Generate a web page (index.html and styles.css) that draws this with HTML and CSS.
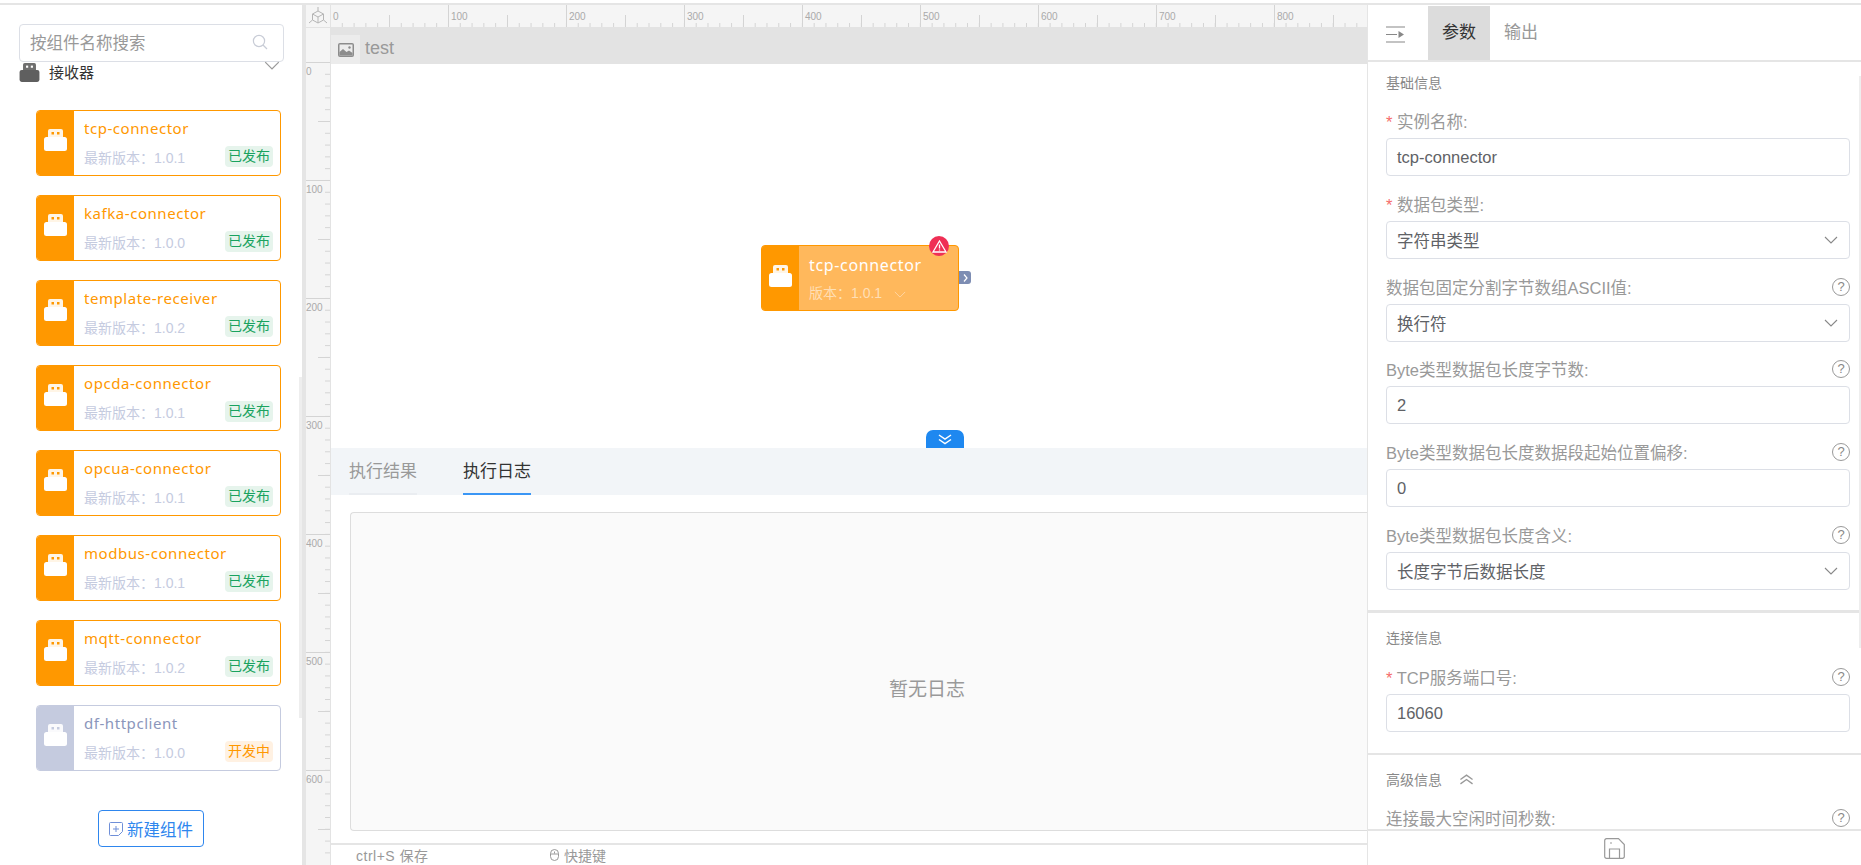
FILE: index.html
```html
<!DOCTYPE html>
<html lang="en">

<head>
    <meta charset="UTF-8">
    <meta name="viewport" content="width=device-width, initial-scale=1.0">
    <title>test</title>
    <link rel="stylesheet" href="styles.css">
</head>

<body>
    <svg class="defs" width="0" height="0">
        <symbol id="plug" viewBox="0 0 23 22">
            <path d="M6 0h11a2 2 0 0 1 2 2v7H4V2a2 2 0 0 1 2-2z" fill="currentColor" opacity=".9"/>
            <rect x="0" y="8" width="23" height="14" rx="2.5" fill="currentColor"/>
            <rect x="7.5" y="3" width="2.5" height="2.5" fill="var(--dot)"/>
            <rect x="13" y="3" width="2.5" height="2.5" fill="var(--dot)"/>
        </symbol>
        <symbol id="chevron" viewBox="0 0 14 8">
            <path d="M1 1l6 6 6-6" fill="none" stroke="currentColor" stroke-width="1.1"/>
        </symbol>
    </svg>

    <div class="topline"></div>
    <div class="app">
        <!-- Component list -->
        <aside class="side">
            <div class="search">
                <span>按组件名称搜索</span>
                <svg width="16" height="16" viewBox="0 0 16 16" fill="none" stroke="#c8ccd6" stroke-width="1.2"><circle cx="7" cy="7" r="5.6"/><path d="M11 11l4 4"/></svg>
            </div>
            <div class="group">
                <svg class="group-icon" width="21" height="19"><use href="#plug"/></svg>
                <span>接收器</span>
                <svg class="group-arrow" width="16" height="9"><use href="#chevron"/></svg>
            </div>
            <div class="cards">
                <div class="card">
                    <div class="card-band"><svg width="23" height="22"><use href="#plug"/></svg></div>
                    <div class="card-main">
                        <div class="card-name">tcp-connector</div>
                        <div class="card-foot"><span>最新版本：1.0.1</span><span class="tag">已发布</span></div>
                    </div>
                </div>
                <div class="card">
                    <div class="card-band"><svg width="23" height="22"><use href="#plug"/></svg></div>
                    <div class="card-main">
                        <div class="card-name">kafka-connector</div>
                        <div class="card-foot"><span>最新版本：1.0.0</span><span class="tag">已发布</span></div>
                    </div>
                </div>
                <div class="card">
                    <div class="card-band"><svg width="23" height="22"><use href="#plug"/></svg></div>
                    <div class="card-main">
                        <div class="card-name">template-receiver</div>
                        <div class="card-foot"><span>最新版本：1.0.2</span><span class="tag">已发布</span></div>
                    </div>
                </div>
                <div class="card">
                    <div class="card-band"><svg width="23" height="22"><use href="#plug"/></svg></div>
                    <div class="card-main">
                        <div class="card-name">opcda-connector</div>
                        <div class="card-foot"><span>最新版本：1.0.1</span><span class="tag">已发布</span></div>
                    </div>
                </div>
                <div class="card">
                    <div class="card-band"><svg width="23" height="22"><use href="#plug"/></svg></div>
                    <div class="card-main">
                        <div class="card-name">opcua-connector</div>
                        <div class="card-foot"><span>最新版本：1.0.1</span><span class="tag">已发布</span></div>
                    </div>
                </div>
                <div class="card">
                    <div class="card-band"><svg width="23" height="22"><use href="#plug"/></svg></div>
                    <div class="card-main">
                        <div class="card-name">modbus-connector</div>
                        <div class="card-foot"><span>最新版本：1.0.1</span><span class="tag">已发布</span></div>
                    </div>
                </div>
                <div class="card">
                    <div class="card-band"><svg width="23" height="22"><use href="#plug"/></svg></div>
                    <div class="card-main">
                        <div class="card-name">mqtt-connector</div>
                        <div class="card-foot"><span>最新版本：1.0.2</span><span class="tag">已发布</span></div>
                    </div>
                </div>
                <div class="card card-dev">
                    <div class="card-band"><svg width="23" height="22"><use href="#plug"/></svg></div>
                    <div class="card-main">
                        <div class="card-name">df-httpclient</div>
                        <div class="card-foot"><span>最新版本：1.0.0</span><span class="tag tag-dev">开发中</span></div>
                    </div>
                </div>
            </div>
            <button class="new-btn" type="button">
                <svg width="14" height="14" viewBox="0 0 14 14" fill="none" stroke="#6f8fd8"><path d="M1.500.5h11a1 1 0 0 1 1 1v8l-4 4h-8a1 1 0 0 1-1-1v-11a1 1 0 0 1 1-1zM7 4v6M4 7h6"/></svg>
                新建组件
            </button>
            <div class="side-thumb"></div>
        </aside>

        <!-- Canvas with rulers -->
        <main class="stage">
            <div class="corner">
                <svg width="20" height="20" viewBox="0 0 20 20" fill="none" stroke="#b5b5b5"><path d="M10 1v4M10 5l5.500 3v6L10 17l-5.500-3V8zM4.500 8l5.500 3 5.500-3M10 11v6M4.500 14L1 17M15.500 14L19 17"/></svg>
            </div>
            <div class="ruler-top">
                <span>0</span><span>100</span><span>200</span><span>300</span><span>400</span><span>500</span><span>600</span><span>700</span><span>800</span>
            </div>
            <div class="ruler-left">
                <div class="ruler-left-ticks">
                    <span>0</span><span>100</span><span>200</span><span>300</span><span>400</span><span>500</span><span>600</span>
                </div>
            </div>
            <div class="work">
                <div class="page-bar">
                    <div class="page-tab">
                        <svg width="16" height="14" viewBox="0 0 16 14"><rect width="16" height="14" rx="2" fill="#8c8c8c"/><rect x="1.500" y="1.500" width="13" height="11" fill="#ececec"/><path d="M1.500 12.500V9l3.500-3 3.500 3 2.500-1.500 3.500 2.500v2.500z" fill="#8c8c8c"/><circle cx="11.500" cy="4.500" r="1.200" fill="#8c8c8c"/></svg>
                    </div>
                    <span class="page-name">test</span>
                </div>
                <div class="canvas">
                    <div class="node">
                        <div class="node-band"><svg width="23" height="22"><use href="#plug"/></svg></div>
                        <div class="node-main">
                            <div class="node-name">tcp-connector</div>
                            <div class="node-ver">版本：1.0.1 <svg width="12" height="7"><use href="#chevron"/></svg></div>
                        </div>
                        <div class="node-alert">
                            <svg width="15" height="13" viewBox="0 0 15 13" fill="none" stroke="#fff" stroke-width="1.300"><path d="M7.500 1L14 12H1zM7.500 4.500v4M7.500 9.500v1"/></svg>
                        </div>
                        <div class="node-port">
                            <svg width="5" height="8" viewBox="0 0 5 8" fill="none" stroke="#fff" stroke-width="1.200"><path d="M1 .5L4 4 1 7.500"/></svg>
                        </div>
                    </div>
                    <div class="collapse">
                        <svg width="14" height="11" viewBox="0 0 14 11" fill="none" stroke="#fff" stroke-width="1.500"><path d="M1 1l6 4 6-4M1 5.500l6 4 6-4"/></svg>
                    </div>
                </div>
                <div class="log-tabs">
                    <span class="log-tab">执行结果</span>
                    <span class="log-tab log-tab-on">执行日志</span>
                </div>
                <div class="log-body">
                    <div class="log-empty">暂无日志</div>
                </div>
                <div class="status">
                    <span class="status-save">ctrl+S 保存</span>
                    <span class="status-keys">
                        <svg width="9" height="12" viewBox="0 0 9 12" fill="none" stroke="#999"><rect x=".5" y=".5" width="8" height="11" rx="4"/><path d="M.5 5h8M4.500 2.500v2"/></svg>
                        快捷键
                    </span>
                </div>
            </div>
        </main>

        <!-- Properties -->
        <aside class="props">
            <div class="props-head">
                <svg class="props-toggle" width="19" height="17" viewBox="0 0 19 17" fill="none" stroke="#888" stroke-width="1.200"><path d="M0 1h19M0 8.500h11M0 16h19"/><path d="M12.500 5l5.500 3.500-5.500 3.500z" fill="#888" stroke="none"/></svg>
                <span class="props-tab props-tab-on">参数</span>
                <span class="props-tab">输出</span>
            </div>
            <div class="props-body">
                <section class="sec sec-first">
                    <h4>基础信息</h4>
                    <div class="field">
                        <div class="field-label"><span><i>*</i> 实例名称:</span></div>
                        <div class="box">tcp-connector</div>
                    </div>
                    <div class="field">
                        <div class="field-label"><span><i>*</i> 数据包类型:</span></div>
                        <div class="box">字符串类型<svg width="14" height="8"><use href="#chevron"/></svg></div>
                    </div>
                    <div class="field">
                        <div class="field-label"><span>数据包固定分割字节数组ASCII值:</span><b class="help">?</b></div>
                        <div class="box">换行符<svg width="14" height="8"><use href="#chevron"/></svg></div>
                    </div>
                    <div class="field">
                        <div class="field-label"><span>Byte类型数据包长度字节数:</span><b class="help">?</b></div>
                        <div class="box">2</div>
                    </div>
                    <div class="field">
                        <div class="field-label"><span>Byte类型数据包长度数据段起始位置偏移:</span><b class="help">?</b></div>
                        <div class="box">0</div>
                    </div>
                    <div class="field">
                        <div class="field-label"><span>Byte类型数据包长度含义:</span><b class="help">?</b></div>
                        <div class="box">长度字节后数据长度<svg width="14" height="8"><use href="#chevron"/></svg></div>
                    </div>
                </section>
                <section class="sec sec-second">
                    <h4>连接信息</h4>
                    <div class="field">
                        <div class="field-label"><span><i>*</i> TCP服务端口号:</span><b class="help">?</b></div>
                        <div class="box">16060</div>
                    </div>
                </section>
                <section class="sec sec-third">
                    <h4>高级信息 <svg width="15" height="11" viewBox="0 0 13 10" fill="none" stroke="#999" stroke-width="1.200"><path d="M1 5l5.500-4L12 5M1 9l5.500-4L12 9"/></svg></h4>
                    <div class="field">
                        <div class="field-label"><span>连接最大空闲时间秒数:</span><b class="help">?</b></div>
                    </div>
                </section>
                <div class="props-thumb"></div>
            </div>
            <div class="props-foot">
                <svg width="21" height="21" viewBox="0 0 21 21" fill="none" stroke="#999" stroke-width="1.200"><path d="M2.500.7h12l5.800 5.800v12a1.800 1.800 0 0 1-1.800 1.800h-16A1.800 1.800 0 0 1 .7 18.500v-16A1.800 1.800 0 0 1 2.500.7zM5.500 20.300V11h10v9.300M6 5h2"/></svg>
            </div>
        </aside>
    </div>
</body>

</html>
```
FILE: styles.css
```css
* {
    box-sizing: border-box;
}

body {
    margin: 0;
    height: 865px;
    overflow: hidden;
    background-color: #fff;
    font-family: "Liberation Sans", "Noto Sans CJK SC", sans-serif;
    color: #666;
}

.defs {
    display: block;
    height: 0;
}

.topline {
    height: 5px;
    border-top: 3px solid #fff;
    background-color: #e5e5e5;
}

.app {
    display: flex;
    height: 860px;
}

/* Component list */
.side {
    position: relative;
    flex: 0 0 306px;
    border-right: 4px solid #e5e5e5;
    padding: 19px 0 0 19px;
}

.search {
    display: flex;
    align-items: center;
    justify-content: space-between;
    width: 265px;
    height: 38px;
    padding: 0 15px 3px 10px;
    border: 1px solid #dcdfe6;
    border-radius: 4px;
    font-size: 16.5px;
    color: #999;
}

.group {
    display: flex;
    align-items: center;
    height: 20px;
    font-size: 15px;
    color: #333;
}

.group > span {
    margin-top: -2px;
}

.group-icon {
    color: #5f5f5f;
    --dot: #fff;
    margin-right: 9px;
}

.group-arrow {
    margin-left: 170px;
    margin-top: -14px;
    color: #999;
}

.cards {
    display: flex;
    flex-direction: column;
    gap: 19px;
    margin: 28px 0 0 17px;
}

.card {
    display: flex;
    width: 245px;
    height: 66px;
    border: 1px solid #ff9800;
    border-radius: 4px;
    overflow: hidden;
    --dot: #ff9800;
}

.card-band {
    display: flex;
    align-items: center;
    justify-content: center;
    flex: 0 0 37px;
    padding-bottom: 6px;
    background-color: #ff9800;
    color: #fff;
}

.card-main {
    flex: 1;
    padding: 4px 7px 0 10px;
}

.card-name {
    height: 26px;
    font-family: "Noto Sans", "Noto Sans CJK SC", sans-serif;
    font-size: 15px;
    line-height: 26px;
    color: #ff9800;
    letter-spacing: .55px;
}

.card-foot {
    display: flex;
    align-items: center;
    justify-content: space-between;
    margin-top: 5px;
    font-size: 14px;
    color: #c5cbdf;
}

.tag {
    width: 48px;
    height: 21px;
    border-radius: 4px;
    background-color: #e6f4ec;
    color: #1aa35f;
    font-size: 14px;
    line-height: 21px;
    text-align: center;
}

.tag-dev {
    background-color: #fff1e2;
    color: #ff9800;
}

.card-dev {
    border-color: #c5cbdf;
    --dot: #c5cbdf;
}

.card-dev .card-band {
    background-color: #c5cbdf;
}

.card-dev .card-name {
    color: #8b96bb;
}

.new-btn {
    display: flex;
    align-items: center;
    justify-content: center;
    gap: 4px;
    width: 106px;
    height: 37px;
    margin: 39px 0 0 79px;
    padding: 0;
    border: 1px solid #2e86ee;
    border-radius: 4px;
    background-color: #fff;
    font-family: inherit;
    font-size: 16.5px;
    color: #2e86ee;
}

.side-thumb {
    position: absolute;
    right: 0;
    top: 372px;
    width: 3px;
    height: 341px;
    background-color: #eee;
}

/* Canvas and rulers */
.stage {
    flex: 0 0 1061px;
    display: grid;
    grid-template-columns: 25px 1fr;
    grid-template-rows: 23px 1fr;
    min-width: 0;
}

.corner {
    display: flex;
    align-items: center;
    justify-content: center;
    background-color: #f5f5f5;
    border-bottom: 1px solid #e3e3e3;
    border-right: 1px solid #e3e3e3;
}

.ruler-top {
    display: flex;
    overflow: hidden;
    background-color: #f5f5f5;
    background-image:
        linear-gradient(to right, #d4d4d4 1px, transparent 1px),
        linear-gradient(to right, #d4d4d4 1px, transparent 1px),
        linear-gradient(to right, #d4d4d4 1px, transparent 1px);
    background-size: 118px 100%, 59px 12px, 11.8px 4px;
    background-position: -1px 0, -1px 100%, -1px 100%;
    background-repeat: repeat-x;
    border-bottom: 1px solid #e3e3e3;
    font-size: 10px;
    color: #aaa;
}

.ruler-top span {
    flex: 0 0 118px;
    padding: 6px 0 0 2px;
}

.ruler-left {
    background-color: #f5f5f5;
    border-right: 1px solid #e3e3e3;
    padding-top: 34px;
    overflow: hidden;
}

.ruler-left-ticks {
    height: 800px;
    background-image:
        linear-gradient(#d4d4d4 1px, transparent 1px),
        linear-gradient(#d4d4d4 1px, transparent 1px),
        linear-gradient(#d4d4d4 1px, transparent 1px);
    background-size: 100% 118px, 12px 59px, 5px 11.8px;
    background-position: 0 0, 100% 0, 100% 0;
    background-repeat: repeat-y;
    font-size: 10px;
    color: #aaa;
}

.ruler-left-ticks span {
    display: block;
    height: 118px;
    padding-top: 4px;
}

.work {
    display: flex;
    flex-direction: column;
    min-width: 0;
    height: 837px;
}

.page-bar {
    display: flex;
    align-items: flex-end;
    flex: 0 0 36px;
    background-color: #e3e3e3;
}

.page-tab {
    display: flex;
    align-items: center;
    justify-content: center;
    width: 29px;
    height: 29px;
    background-color: #ececec;
}

.page-name {
    margin-left: 5px;
    height: 29px;
    font-size: 18px;
    line-height: 26px;
    color: #999;
}

.canvas {
    position: relative;
    flex: 0 0 384px;
    background-color: #fff;
}

.node {
    position: absolute;
    left: 430px;
    top: 181px;
    display: flex;
    width: 198px;
    height: 66px;
    border: 1px solid #ff9800;
    border-radius: 4px;
    background-color: #ffb85c;
    --dot: #ff9800;
}

.node-band {
    display: flex;
    align-items: center;
    justify-content: center;
    flex: 0 0 37px;
    padding-bottom: 5px;
    background-color: #ff9800;
    color: #fff;
    border-radius: 3px 0 0 3px;
}

.node-main {
    padding: 7px 0 0 10px;
}

.node-name {
    font-family: "Noto Sans", "Noto Sans CJK SC", sans-serif;
    font-size: 16px;
    line-height: 24px;
    color: #fff;
    letter-spacing: .65px;
}

.node-ver {
    margin-top: 5px;
    font-size: 14px;
    color: #ffdfb5;
}

.node-ver svg {
    margin-left: 8px;
    color: #ffd6a5;
}

.node-alert {
    position: absolute;
    right: 9px;
    top: -10px;
    display: flex;
    align-items: center;
    justify-content: center;
    width: 20px;
    height: 20px;
    border-radius: 50%;
    background-color: #ef2f55;
}

.node-port {
    position: absolute;
    right: -13px;
    top: 25px;
    display: flex;
    align-items: center;
    justify-content: center;
    width: 12px;
    height: 13px;
    border-radius: 0 3px 3px 0;
    background-color: #7d8db3;
}

.collapse {
    position: absolute;
    left: 595px;
    bottom: 0;
    display: flex;
    align-items: center;
    justify-content: center;
    width: 38px;
    height: 18px;
    border-radius: 7px 7px 0 0;
    background-color: #1e88f0;
}

.log-tabs {
    display: flex;
    gap: 46px;
    flex: 0 0 47px;
    padding-left: 18px;
    background-color: #f2f5f8;
}

.log-tab {
    height: 47px;
    line-height: 47px;
    font-size: 17px;
    color: #999;
    border-bottom: 2px solid #eaedf1;
}

.log-tab-on {
    color: #333;
    border-bottom-color: #3a96f5;
}

.log-body {
    flex: 1;
    padding: 17px 0 12px 19px;
}

.log-empty {
    display: flex;
    align-items: center;
    justify-content: center;
    height: 100%;
    padding: 32px 0 0 136px;
    border: 1px solid #ddd;
    border-right: 0;
    border-radius: 4px 0 0 4px;
    background-color: #fafafa;
    font-size: 19px;
    color: #999;
}

.status {
    display: flex;
    align-items: center;
    flex: 0 0 21px;
    border-top: 2px solid #e5e5e5;
    padding-left: 25px;
    font-size: 14px;
    color: #999;
}

.status-save {
    width: 194px;
    letter-spacing: .5px;
}

.status-keys svg {
    margin-right: 1px;
}

/* Properties */
.props {
    display: flex;
    flex-direction: column;
    flex: 1;
    border-left: 1px solid #e5e5e5;
    min-width: 0;
}

.props-head {
    display: flex;
    align-items: flex-end;
    flex: 0 0 57px;
    border-bottom: 2px solid #e5e5e5;
}

.props-toggle {
    margin: 0 23px 17px 18px;
}

.props-tab {
    height: 54px;
    line-height: 54px;
    font-size: 17px;
    color: #999;
}

.props-tab-on {
    width: 62px;
    margin-right: 14px;
    background-color: #dcdcdc;
    text-align: center;
    color: #333;
}

.props-body {
    position: relative;
    flex: 1;
    overflow: hidden;
}

.sec {
    padding: 0 11px 0 18px;
}

.sec h4 {
    display: flex;
    align-items: center;
    gap: 17px;
    margin: 0;
    height: 20px;
    font-size: 14px;
    font-weight: normal;
    color: #888;
}

.sec-first {
    height: 551px;
    padding-top: 10px;
    border-bottom: 3px solid #e5e5e5;
}

.sec-second {
    height: 142px;
    padding-top: 14px;
    border-bottom: 2px solid #e5e5e5;
}

.sec-third {
    padding-top: 14px;
}

.field {
    margin-bottom: 15.75px;
}

.sec h4 + .field {
    margin-top: 17px;
}

.sec-second h4 + .field {
    margin-top: 18px;
}

.field-label {
    display: flex;
    align-items: center;
    justify-content: space-between;
    height: 24px;
    margin-bottom: 5px;
    font-size: 16.5px;
    color: #999;
}

.field-label i {
    font-style: normal;
    color: #f56c6c;
}

.help {
    width: 18px;
    height: 18px;
    border: 1px solid #999;
    border-radius: 50%;
    font-size: 13px;
    font-weight: normal;
    line-height: 16px;
    text-align: center;
    color: #888;
}

.box {
    display: flex;
    align-items: center;
    justify-content: space-between;
    height: 38px;
    padding: 0 11px 0 10px;
    border: 1px solid #dcdfe6;
    border-radius: 4px;
    font-size: 16.5px;
    color: #606266;
}

.box svg {
    color: #888;
}

.props-thumb {
    position: absolute;
    right: 0;
    top: 14px;
    width: 2px;
    height: 572px;
    background-color: #eee;
}

.props-foot {
    display: flex;
    align-items: center;
    justify-content: center;
    flex: 0 0 36px;
    border-top: 2px solid #e5e5e5;
    background-color: #fff;
}
```
